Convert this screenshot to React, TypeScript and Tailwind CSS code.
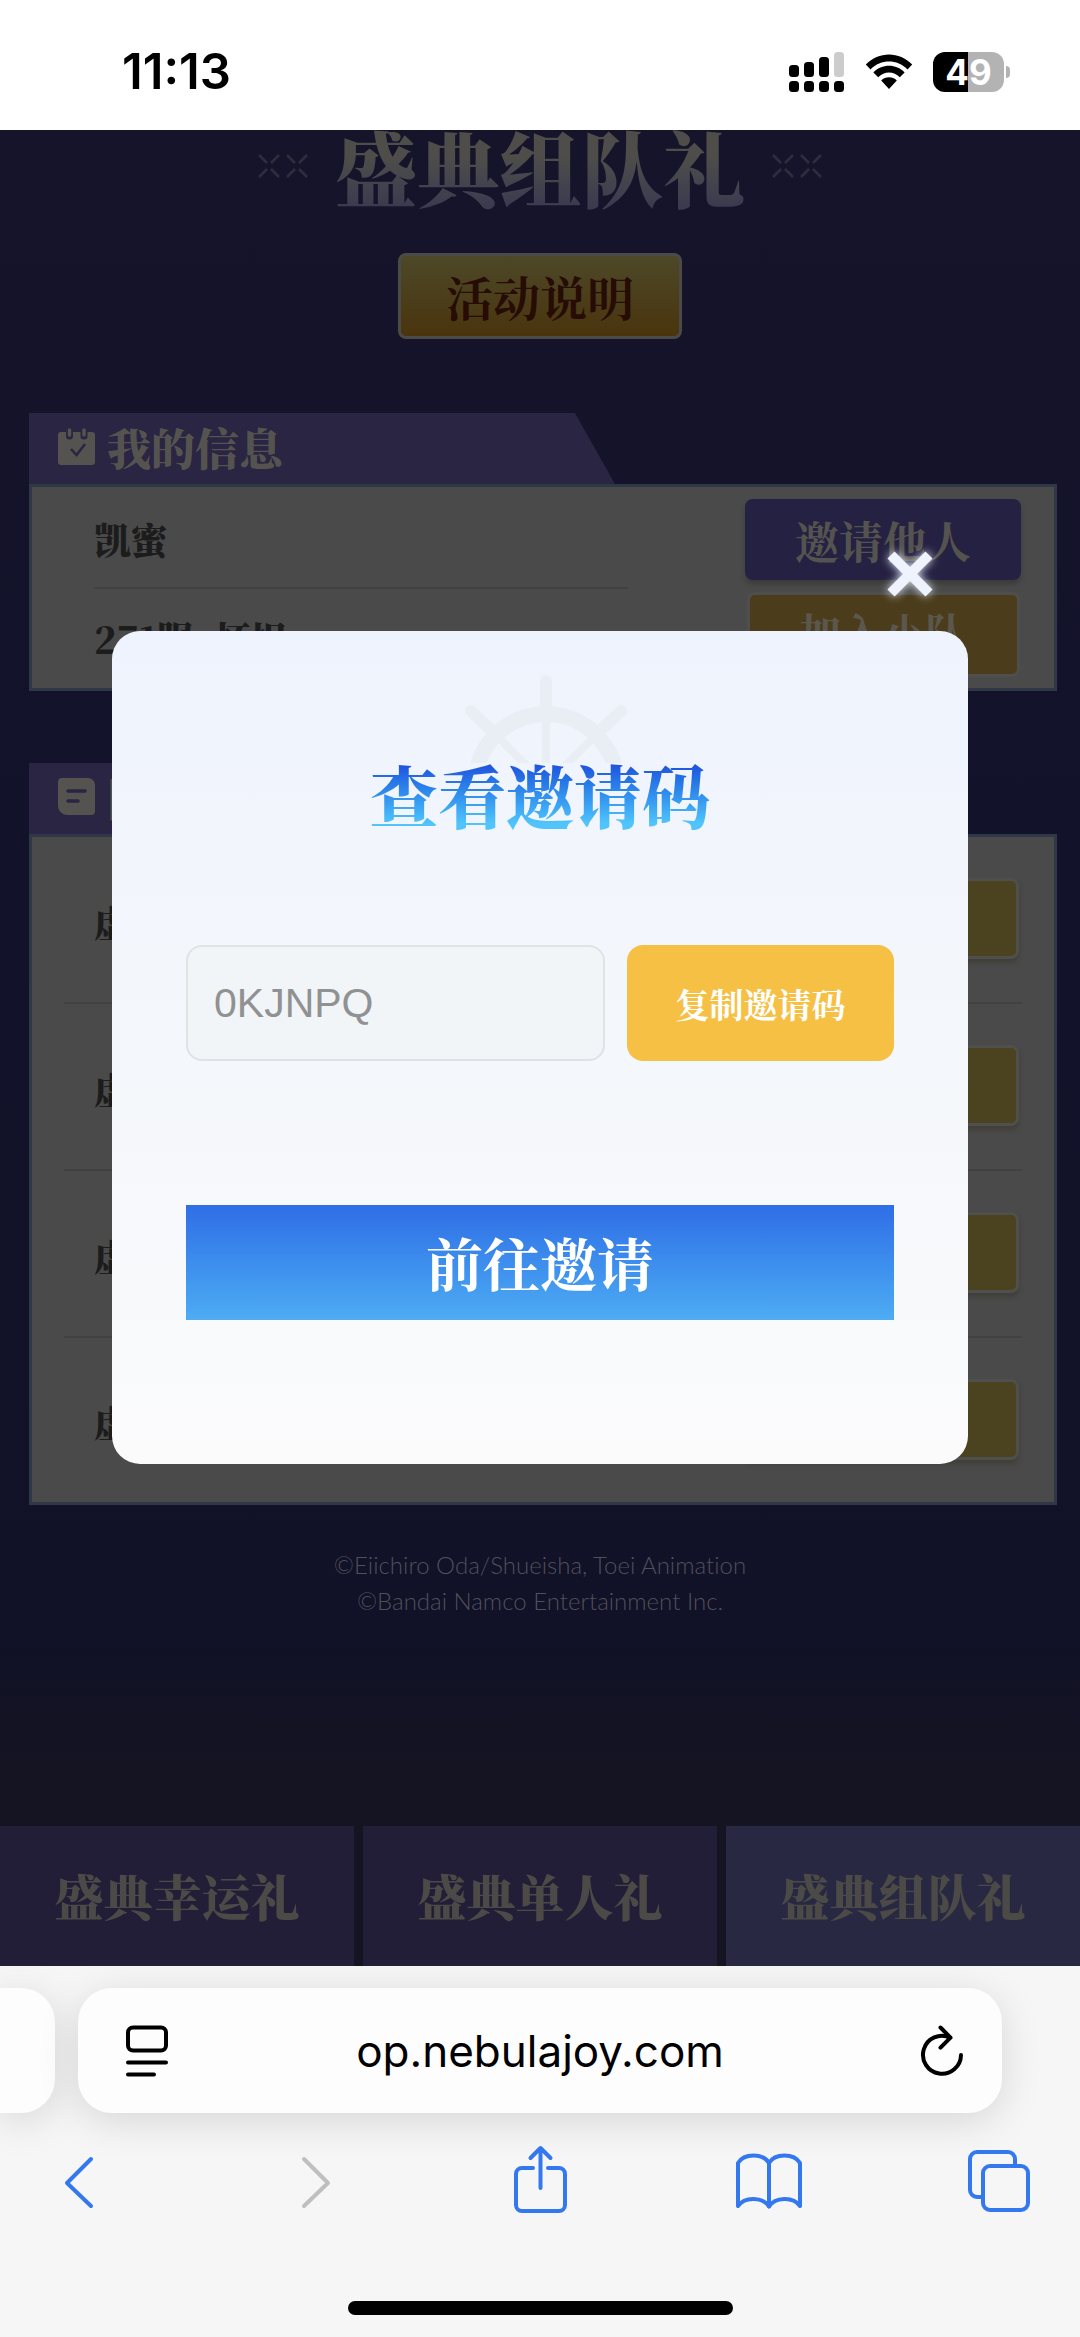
import React from 'react';

const SERIF = "font-['Noto_Serif_CJK_SC','Liberation_Serif','Noto_Sans_CJK_SC',serif]";

const TABS = [
  { id: 'lucky', label: '盛典幸运礼' },
  { id: 'solo', label: '盛典单人礼' },
  { id: 'team', label: '盛典组队礼' },
];

const SLOTS = ['slot-1', 'slot-2', 'slot-3', 'slot-4'];

function StatusBar() {
  return (
    <header className="flex h-[130px] items-center justify-between bg-white pt-3.5 pr-[70px] pl-[122px]">
      <span className="font-[Inter,sans-serif] text-[49px] leading-[56px] font-semibold text-black">11:13</span>
      <div className="flex items-center gap-5">
        <svg viewBox="0 0 56 40" className="h-10 w-14" aria-hidden>
          <rect x="0" y="13" width="10" height="12" rx="3.5" />
          <rect x="15" y="10" width="10" height="15" rx="3.5" />
          <rect x="30" y="5" width="10" height="20" rx="3.5" />
          <rect x="45" y="0" width="10" height="25" rx="3.5" fill="#cccccc" />
          <rect x="0" y="29" width="10" height="11" rx="3.5" />
          <rect x="15" y="29" width="10" height="11" rx="3.5" />
          <rect x="30" y="29" width="10" height="11" rx="3.5" />
          <rect x="45" y="29" width="10" height="11" rx="3.5" />
        </svg>
        <svg viewBox="0 0 48 36" className="h-9 w-12" aria-hidden>
          <path d="M0.8 10.6C13.5-3 34.5-3 47.2 10.6L42.5 15.4C32.2 4.8 15.8 4.8 5.5 15.4Z" />
          <path d="M8.4 18.4C16.8 9.6 31.2 9.6 39.6 18.4L34.8 23.3C28.8 17 19.2 17 13.2 23.3Z" />
          <path d="M16.2 26.4C20.4 22.2 27.6 22.2 31.8 26.4L24 35Z" />
        </svg>
        <div className="flex items-center gap-0.5">
          <div className="flex h-10 w-[71px] items-center justify-center rounded-xl bg-[linear-gradient(90deg,#000_50%,#b3b3b3_50%)]">
            <span className="font-[Inter,sans-serif] text-[35px] leading-10 font-bold text-white">49</span>
          </div>
          <span className="h-3 w-1 rounded-r-full bg-[#b3b3b3]" />
        </div>
      </div>
    </header>
  );
}

function Sparks() {
  return (
    <svg viewBox="0 0 52 26" className="h-[26px] w-[52px] text-[#2f2e3d]" fill="none" stroke="currentColor" strokeWidth="2.5" aria-hidden>
      <path d="M2 2l8 8M22 2l-8 8M2 24l8-8M22 24l-8-8" />
      <path d="M30 2l8 8M50 2l-8 8M30 24l8-8M50 24l-8-8" />
    </svg>
  );
}

function CalendarIcon() {
  return (
    <svg viewBox="0 0 37 37" className="h-[37px] w-[37px]" aria-hidden>
      <rect x="0" y="4" width="37" height="33" rx="3" fill="#55534f" />
      <path d="M11.5 1v7M26 1v7" stroke="#292542" strokeWidth="7" strokeLinecap="round" />
      <path d="M11.5 2v5M26 2v5" stroke="#55534f" strokeWidth="3.5" strokeLinecap="round" />
      <path d="M13 21l5.5 6L27 16" fill="none" stroke="#292542" strokeWidth="2.5" />
    </svg>
  );
}

function NoteIcon() {
  return (
    <svg viewBox="0 0 37 37" className="h-[37px] w-[37px]" aria-hidden>
      <path d="M4 0h26a7 7 0 0 1 7 7v26a4 4 0 0 1-4 4H9a9 9 0 0 1-9-9V4a4 4 0 0 1 4-4z" fill="#55534f" />
      <path d="M10 13h17M10 23h10" stroke="#292542" strokeWidth="3.5" strokeLinecap="round" />
    </svg>
  );
}

type PanelProps = { title: string; icon: React.ReactNode; children: React.ReactNode };

function Panel({ title, icon, children }: PanelProps) {
  return (
    <section className="mr-[23px] ml-[29px]">
      <div className="flex h-[71px] w-[57%] items-center gap-3 bg-[#292542] pb-1 pl-[29px] [clip-path:polygon(0_0,calc(100%-40px)_0,100%_100%,0_100%)]">
        {icon}
        <h2 className="text-[44px] leading-[52px] font-black text-[#55534f]">{title}</h2>
      </div>
      <div className="border-[3px] border-[#303847] bg-[#4a4a4a]">{children}</div>
    </section>
  );
}

function Wheel() {
  return (
    <svg
      viewBox="0 0 180 88"
      className="absolute top-11 left-1/2 h-[88px] w-[180px] -translate-x-[84px]"
      fill="none"
      stroke="#e9eef5"
      strokeLinecap="round"
      aria-hidden
    >
      <circle cx="90" cy="110" r="71" strokeWidth="16" />
      <path d="M90 6v26M15 36l18 17M165 36l-18 17" strokeWidth="12" />
      <path d="M90 34v76M36 56l54 54M144 56l-54 54" strokeWidth="8" />
    </svg>
  );
}

function InviteDialog() {
  return (
    <div className="absolute inset-x-0 top-[501px] px-28">
      <div
        role="dialog"
        aria-labelledby="invite-title"
        className="relative flex flex-col rounded-[28px] bg-linear-to-b from-[#eff3fd] via-[#f4f7fb] to-[#fbfbfc] px-[74px] pt-[121px] pb-36"
      >
        <button aria-label="关闭" className="absolute -top-[82px] right-[33px]">
          <svg
            viewBox="0 0 50 50"
            className="h-[50px] w-[50px] drop-shadow-[0_0_5px_#e8effc]"
            fill="none"
            stroke="#eef3fe"
            strokeWidth="10"
            aria-hidden
          >
            <path d="M6 6l38 38M44 6L6 44" />
          </svg>
        </button>
        <Wheel />
        <h1
          id="invite-title"
          className="relative bg-linear-to-b from-[#2152dd] from-15% to-[#50c4fb] to-85% bg-clip-text text-center text-[68px] leading-[84px] font-black text-transparent"
        >
          查看邀请码
        </h1>
        <div className="mt-[109px] flex gap-[22px]">
          <input
            aria-label="邀请码"
            readOnly
            value="0KJNPQ"
            className="h-[116px] min-w-0 flex-1 rounded-2xl border-2 border-[#dfe3e6] bg-[#f2f5f7] px-[26px] font-['Liberation_Sans',sans-serif] text-[41px] text-[#8f9193]"
          />
          <button className="h-[116px] w-[267px] rounded-2xl bg-[#f6c044] text-[34px] font-bold text-white">
            复制邀请码
          </button>
        </div>
        <button className="mt-36 h-[115px] bg-linear-to-b from-[#306de6] to-[#4eacf3] pb-1 text-[57px] leading-[84px] font-bold text-white">
          前往邀请
        </button>
      </div>
    </div>
  );
}

function EventPage() {
  return (
    <main
      className={`${SERIF} relative flex flex-1 flex-col overflow-hidden bg-[linear-gradient(180deg,#15142b_0%,#12122a_45%,#111127_82%,#151422_90%,#151422_100%)]`}
    >
      <div className="flex h-[72px] items-center justify-center gap-[26px]">
        <Sparks />
        <h1 className="bg-linear-to-b from-[#4e4d4a] from-40% to-[#3b3b50] to-95% bg-clip-text text-[82px] leading-[88px] font-black text-transparent">
          盛典组队礼
        </h1>
        <Sparks />
      </div>
      <button className="mx-auto mt-[51px] mb-[74px] h-[86px] w-[284px] rounded-lg border-[3px] border-[#4b4a48] bg-linear-to-b from-[#4c4828] to-[#4a340c] text-[47px] leading-[60px] font-bold text-[#260c04]">
        活动说明
      </button>

      <Panel title="我的信息" icon={<CalendarIcon />}>
        <div className="flex justify-between pr-[33px] pl-[62px] text-[37px] font-black text-[#1c1c1c]">
          <div className="w-[534px]">
            <p className="flex h-[102px] items-center border-b-2 border-[#414141] pt-1.5">凯蜜</p>
            <p className="flex h-[99px] items-center gap-5">
              <span>271服</span>
              <span>杯坦</span>
            </p>
          </div>
          <div className="flex flex-col items-center gap-3 pt-3">
            <button className="h-[81px] w-[276px] rounded-lg bg-[#252142] text-[44px] leading-[52px] font-bold text-[#55534f] shadow-[0_4px_4px_#3c3b3a]">
              邀请他人
            </button>
            <button className="h-[85px] w-[273px] rounded-lg border-[3px] border-[#4f4e4c] bg-[#4b3d1c] pb-2 text-[42px] leading-[52px] font-bold text-[#5b574c]">
              加入小队
            </button>
          </div>
        </div>
      </Panel>

      <div className="mt-[72px]">
        <Panel title="队伍信息" icon={<NoteIcon />}>
          <ul className="px-8">
            {SLOTS.map((slot) => (
              <li
                key={slot}
                className="flex h-[167px] items-center justify-between border-b-2 border-[#414141] pr-[3px] pl-[30px] text-[37px] font-black text-[#1c1c1c] last:h-[164px] last:border-b-0"
              >
                <span className="pt-1.5">虚位以待</span>
                <button className="mb-0.5 h-[81px] w-[273px] rounded-lg border-[3px] border-[#4f4f4d] bg-[#4b4220] text-[42px] leading-[52px] font-bold text-[#5b574c] shadow-[0_4px_4px_#403f38]">
                  邀请入队
                </button>
              </li>
            ))}
          </ul>
        </Panel>
      </div>

      <p className="mt-[42px] text-center font-[Lato,sans-serif] text-[24px] leading-9 font-light text-[#50505a] [font-variant-ligatures:none]">
        ©Eiichiro Oda/Shueisha, Toei Animation
        <br />
        ©Bandai Namco Entertainment Inc.
      </p>

      <nav className="mt-auto grid grid-cols-3 gap-[9px]">
        {TABS.map((tab) => (
          <a
            key={tab.id}
            href={`#${tab.id}`}
            className={`flex h-[140px] items-center justify-center text-[49px] font-black text-[#4b4a46] ${
              tab.id === 'team' ? 'bg-[#292843]' : 'bg-[#231e38]'
            }`}
          >
            {tab.label}
          </a>
        ))}
      </nav>

      <InviteDialog />
    </main>
  );
}

function BrowserBar() {
  return (
    <footer className="flex h-[371px] flex-col overflow-hidden bg-[#f6f6f6] py-[22px]">
      <div className="flex gap-[23px] pr-[78px]">
        <div className="h-[125px] w-[55px] rounded-r-[34px] bg-[#fdfdfd] shadow-[0_8px_40px_rgba(0,0,0,0.13)]" />
        <div className="flex h-[125px] flex-1 items-center justify-between rounded-[34px] bg-[#fdfdfd] px-[38px] shadow-[0_8px_40px_rgba(0,0,0,0.13)]">
          <button aria-label="页面设置">
            <svg viewBox="-10 0 54 52" className="h-[52px] w-[54px]" fill="none" stroke="#000" strokeWidth="4" strokeLinecap="round" aria-hidden>
              <rect x="2" y="2.5" width="38" height="23" rx="5" />
              <path d="M2 37.5h38M2 49.5h26" />
            </svg>
          </button>
          <span className="font-[Inter,sans-serif] text-[44px] leading-[60px] text-black">op.nebulajoy.com</span>
          <button aria-label="刷新">
            <svg viewBox="-10 0 54 52" className="h-[52px] w-[54px]" fill="none" stroke="#000" strokeWidth="4" strokeLinecap="round" strokeLinejoin="round" aria-hidden>
              <path d="M30 12.5A19 19 0 1 0 41 30" />
              <path d="M20.5 2.5l10 10.2-10 10" />
            </svg>
          </button>
        </div>
      </div>

      <div className="mt-7 flex items-center justify-between pr-12 pl-[47px] text-[#3478f0]">
        <button aria-label="后退">
          <svg viewBox="0 0 68 72" className="h-[72px] w-[68px]" fill="none" stroke="currentColor" strokeWidth="4" strokeLinecap="round" strokeLinejoin="round" aria-hidden>
            <path d="M44 18L20 42l24 23" />
          </svg>
        </button>
        <button aria-label="前进" disabled className="text-[#bfbfbf]">
          <svg viewBox="0 0 68 72" className="h-[72px] w-[68px]" fill="none" stroke="currentColor" strokeWidth="4" strokeLinecap="round" strokeLinejoin="round" aria-hidden>
            <path d="M28 18l24 24-24 23" />
          </svg>
        </button>
        <button aria-label="分享">
          <svg viewBox="0 0 68 72" className="h-[72px] w-[68px]" fill="none" stroke="currentColor" strokeWidth="4" strokeLinecap="round" strokeLinejoin="round" aria-hidden>
            <path d="M27 27H16a6 6 0 0 0-6 6v31a6 6 0 0 0 6 6h37a6 6 0 0 0 6-6V33a6 6 0 0 0-6-6H42" />
            <path d="M34.5 47V7M24.5 17l10-10 10 10" />
          </svg>
        </button>
        <button aria-label="书签">
          <svg viewBox="0 0 68 72" className="h-[72px] w-[68px]" fill="none" stroke="currentColor" strokeWidth="4" strokeLinecap="round" strokeLinejoin="round" aria-hidden>
            <path d="M34 22v43.5C28 56 10 55 3 65V22C9 12 28 12 34 22z" />
            <path d="M34 22v43.5C40 56 58 55 65 65V22C59 12 40 12 34 22z" />
          </svg>
        </button>
        <button aria-label="标签页">
          <svg viewBox="0 0 68 72" className="h-[72px] w-[68px]" fill="none" stroke="currentColor" strokeWidth="4" strokeLinejoin="round" aria-hidden>
            <rect x="19" y="25" width="45" height="44" rx="7" />
            <path d="M18 56h-5a7 7 0 0 1-7-7V18a7 7 0 0 1 7-7h31a7 7 0 0 1 7 7v6" />
          </svg>
        </button>
      </div>
      <div className="mx-auto mt-auto h-3.5 w-[385px] rounded-full bg-black" />
    </footer>
  );
}

export default function App() {
  return (
    <div className="flex min-h-screen flex-col bg-[#f6f6f6]">
      <StatusBar />
      <EventPage />
      <BrowserBar />
    </div>
  );
}
